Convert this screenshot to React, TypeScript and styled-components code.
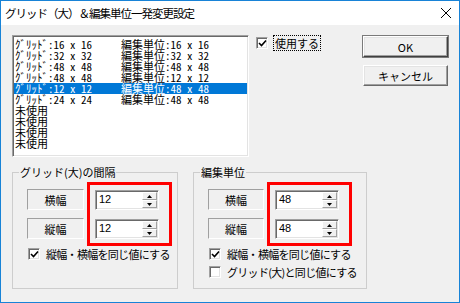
import styled, {createGlobalStyle} from "styled-components";

const GlobalStyle = createGlobalStyle`
    html, body {
        margin: 0;
        padding: 0;
        background: #ffffff;
    }
    body {
        font-family: "Noto Sans CJK JP", "Noto Sans", sans-serif;
        font-size: 11px;
        color: #000;
    }
`

const rows = [
    {grid: "16 x 16", unit: "16 x 16"},
    {grid: "32 x 32", unit: "32 x 32"},
    {grid: "48 x 48", unit: "48 x 48"},
    {grid: "48 x 48", unit: "12 x 12"},
    {grid: "12 x 12", unit: "48 x 48", selected: true},
    {grid: "24 x 24", unit: "48 x 48"},
];

const CheckMark = () => (
    <svg width="9" height="9" viewBox="0 0 9 9">
        <path d="M1 4 L3.5 6.5 L8 1.5" fill="none" stroke="#000" strokeWidth="1.6"/>
    </svg>
);

const Arrow = ({down}: { down?: boolean }) => (
    <svg width="5" height="3" viewBox="0 0 5 3">
        {down ? <path d="M0 0 H5 L2.5 3 Z" fill="#000"/> : <path d="M0 3 H5 L2.5 0 Z" fill="#000"/>}
    </svg>
);

const SpinEdit = ({value}: { value: string }) => (
    <StyledEdit>
        <EditText>{value}</EditText>
        <SpinColumn>
            <SpinButton><Arrow/></SpinButton>
            <SpinButton><Arrow down/></SpinButton>
        </SpinColumn>
    </StyledEdit>
);

const Check = ({checked, children}: { checked?: boolean; children: string }) => (
    <CheckRow>
        <CheckBox>{checked && <CheckMark/>}</CheckBox>
        <span>{children}</span>
    </CheckRow>
);

const Group = ({title, width, labelWidth, value, unitGroup}: {
    title: string; width: number; labelWidth: number; value: string; unitGroup?: boolean
}) => (
    <StyledGroup $width={width}>
        <Legend>{title}</Legend>
        <FieldRow>
            <LabelColumn>
                <FieldLabel $width={labelWidth}>横幅</FieldLabel>
                <FieldLabel $width={labelWidth}>縦幅</FieldLabel>
            </LabelColumn>
            <Highlight>
                <SpinEdit value={value}/>
                <SpinEdit value={value}/>
            </Highlight>
        </FieldRow>
        <CheckList>
            <Check checked>縦幅・横幅を同じ値にする</Check>
            {unitGroup && <Check>グリッド(大)と同じ値にする</Check>}
        </CheckList>
    </StyledGroup>
);

export default function App() {
    return (
        <>
            <GlobalStyle/>
            <Window>
                <TitleBar>
                    <Title>グリッド（大）＆編集単位一発変更設定</Title>
                    <svg width="10" height="10" viewBox="0 0 10 10">
                        <path d="M0 0 L10 10 M10 0 L0 10" stroke="#000" strokeWidth="1"/>
                    </svg>
                </TitleBar>
                <Body>
                    <TopRow>
                        <ListBox>
                            {rows.map((r, i) => (
                                <ListRow key={i} $selected={r.selected}>
                                    <span>ｸﾞﾘｯﾄﾞ:{r.grid}</span>
                                    <span>編集単位:{r.unit}</span>
                                </ListRow>
                            ))}
                            {[0, 1, 2, 3].map(i => (
                                <ListRow key={"u" + i}><span>未使用</span></ListRow>
                            ))}
                        </ListBox>
                        <UseCheck>
                            <CheckBox><CheckMark/></CheckBox>
                            <FocusLabel>使用する</FocusLabel>
                        </UseCheck>
                        <ButtonColumn>
                            <Button $default>OK</Button>
                            <Button>キャンセル</Button>
                        </ButtonColumn>
                    </TopRow>
                    <BottomRow>
                        <Group title="グリッド(大)の間隔" width={166} labelWidth={57} value="12"/>
                        <Group title="編集単位" width={174} labelWidth={56} value="48" unitGroup/>
                    </BottomRow>
                </Body>
            </Window>
        </>
    );
}

const Window = styled.div`
    width: 460px;
    height: 303px;
    box-sizing: border-box;
    border: 1px solid #1883d7;
    display: flex;
    flex-direction: column;
    background: #f0f0f0;
`
const TitleBar = styled.div`
    height: 24px;
    flex: none;
    background: #fff;
    display: flex;
    align-items: center;
    justify-content: space-between;
    padding: 0 8px 0 4px;
`
const Title = styled.span`
    font-size: 11.5px;
    line-height: 16px;
    letter-spacing: -1px;
`
const Body = styled.div`
    flex: 1;
    padding: 10px 11px 0 11px;
    display: flex;
    flex-direction: column;
`
const TopRow = styled.div`
    display: flex;
    align-items: flex-start;
`
const ListBox = styled.div`
    width: 237px;
    height: 122px;
    box-sizing: border-box;
    background: #fff;
    border-top: 1px solid #a0a0a0;
    border-left: 1px solid #a0a0a0;
    border-right: 1px solid #fff;
    border-bottom: 1px solid #fff;
    box-shadow: inset 1px 1px 0 #696969, inset -1px -1px 0 #e3e3e3;
    padding: 3px 1px 0 1px;
    font-family: "Noto Sans Mono CJK JP", "Noto Sans CJK JP", monospace;
`
const ListRow = styled.div<{ $selected?: boolean }>`
    display: grid;
    grid-template-columns: 106px 1fr;
    height: 11px;
    line-height: 11px;
    font-size: 11px;
    padding-left: 1px;
    white-space: pre;
    background: ${p => p.$selected ? "#0078d7" : "transparent"};
    color: ${p => p.$selected ? "#fff" : "#000"};
`
const UseCheck = styled.label`
    display: flex;
    align-items: center;
    gap: 5px;
    margin-left: 7px;
    height: 16px;
`
const FocusLabel = styled.span`
    border: 1px dotted #000;
    padding: 0 1px;
    line-height: 14px;
`
const ButtonColumn = styled.div`
    margin-left: auto;
    margin-top: 1px;
    display: flex;
    flex-direction: column;
    gap: 8px;
`
const Button = styled.div<{ $default?: boolean }>`
    width: 85px;
    height: 21px;
    box-sizing: border-box;
    display: flex;
    align-items: center;
    justify-content: center;
    background: #f0f0f0;
    border-top: 1px solid #fff;
    border-left: 1px solid #fff;
    border-right: 1px solid ${p => p.$default ? "#404040" : "#696969"};
    border-bottom: 1px solid ${p => p.$default ? "#404040" : "#696969"};
    box-shadow: inset -1px -1px 0 #a0a0a0, inset 1px 1px 0 #e3e3e3 ${p => p.$default ? ", 0 0 0 1px #7a7a7a" : ""};
    line-height: 14px;
`
const BottomRow = styled.div`
    display: flex;
    gap: 15px;
    margin-top: 8px;
`
const StyledGroup = styled.fieldset<{ $width: number }>`
    width: ${p => p.$width}px;
    height: 124px;
    box-sizing: border-box;
    margin: 0;
    padding: 3px 0 0 14px;
    min-width: 0;
    border: 1px solid #cdcdcd;
`
const Legend = styled.legend`
    margin-left: -8px;
    padding: 0 1px;
    line-height: 14px;
    white-space: nowrap;
`
const FieldRow = styled.div`
    display: flex;
    align-items: center;
`
const LabelColumn = styled.div`
    display: flex;
    flex-direction: column;
    gap: 8px;
`
const FieldLabel = styled.div<{ $width: number }>`
    width: ${p => p.$width}px;
    height: 21px;
    box-sizing: border-box;
    border-top: 1px solid #a0a0a0;
    border-left: 1px solid #a0a0a0;
    border-right: 1px solid #fff;
    border-bottom: 1px solid #fff;
    display: flex;
    align-items: center;
    justify-content: center;
`
const Highlight = styled.div`
    margin-left: 3px;
    border: 3px solid #ff0000;
    padding: 5px 10px 4px 5px;
    display: flex;
    flex-direction: column;
    gap: 9px;
`
const StyledEdit = styled.div`
    width: 64px;
    height: 20px;
    box-sizing: border-box;
    background: #fff;
    border-top: 1px solid #a0a0a0;
    border-left: 1px solid #a0a0a0;
    border-right: 1px solid #fff;
    border-bottom: 1px solid #fff;
    box-shadow: inset 1px 1px 0 #696969, inset -1px -1px 0 #e3e3e3;
    padding: 1px;
    display: flex;
`
const EditText = styled.span`
    flex: 1;
    padding-left: 2px;
    line-height: 14px;
    font-family: "Liberation Sans", "Noto Sans CJK JP", sans-serif;
    font-size: 11px;
`
const SpinColumn = styled.div`
    width: 15px;
    display: flex;
    flex-direction: column;
`
const SpinButton = styled.div`
    flex: 1;
    box-sizing: border-box;
    background: #f0f0f0;
    border-top: 1px solid #fff;
    border-left: 1px solid #fff;
    border-right: 1px solid #a0a0a0;
    border-bottom: 1px solid #a0a0a0;
    display: flex;
    align-items: center;
    justify-content: center;
`
const CheckList = styled.div`
    display: flex;
    flex-direction: column;
    gap: 4px;
    margin-top: 1px;
    margin-left: 1px;
`
const CheckRow = styled.label`
    display: flex;
    align-items: center;
    gap: 6px;
    height: 14px;
    line-height: 14px;
    white-space: nowrap;
    letter-spacing: -0.7px;
`
const CheckBox = styled.span`
    width: 12px;
    height: 12px;
    box-sizing: border-box;
    background: #fff;
    border-top: 1px solid #a0a0a0;
    border-left: 1px solid #a0a0a0;
    border-right: 1px solid #fff;
    border-bottom: 1px solid #fff;
    box-shadow: inset 1px 1px 0 #696969, inset -1px -1px 0 #e3e3e3;
    display: flex;
    align-items: center;
    justify-content: center;
    flex: none;
`
